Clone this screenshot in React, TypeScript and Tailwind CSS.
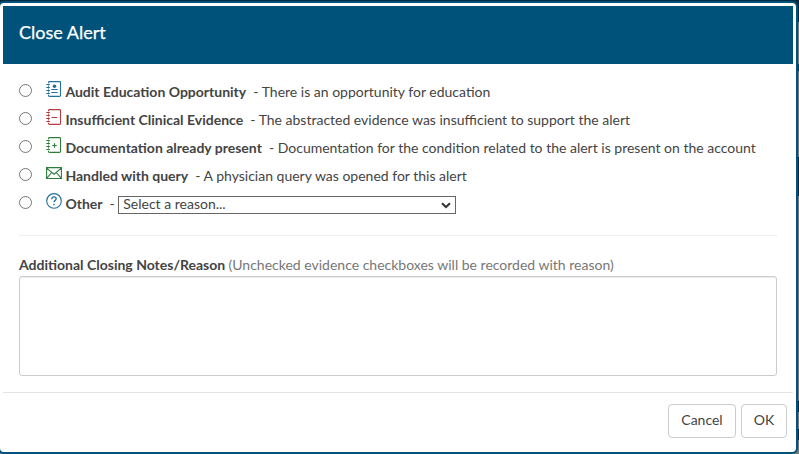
import React from "react";

type IconProps = { kind: "audit" | "minus" | "plus" };

function Notebook({ kind }: IconProps) {
  const color = kind === "audit" ? "#20709b" : kind === "minus" ? "#b83a3c" : "#2f7d3b";
  return (
    <svg width="16" height="16" viewBox="0 0 16 16" fill="none" stroke={color} strokeWidth="1.1">
      <path d="M2.5 2.2V1.5Q2.5 0.6 3.5 0.6H13.5Q14.5 0.6 14.5 1.5V14.5Q14.5 15.4 13.5 15.4H3.5Q2.5 15.4 2.5 14.5V13.8M2.5 4.5V5.7M2.5 7.4V8.6M2.5 10.3V11.5" />
      <path d="M0.3 3.5H3.9M0.3 6.5H3.9M0.3 9.5H3.9M0.3 12.5H3.9" strokeWidth="1" />
      {kind === "audit" && (
        <>
          <circle cx="8.5" cy="5.2" r="1.8" fill={color} stroke="none" />
          <path d="M5.3 8.5H11.7M5.3 11.5H11.7" />
        </>
      )}
      {kind === "minus" && <path d="M5.5 8.5H11" />}
      {kind === "plus" && <path d="M6.2 8.5H10.8M8.5 6.2V10.8" strokeWidth="1.2" />}
    </svg>
  );
}

function Envelope() {
  return (
    <svg width="16" height="16" viewBox="0 0 16 16" fill="none" stroke="#2f7d3b" strokeWidth="1.1">
      <path d="M0.6 2.6H15.4V13.5H0.6ZM0.6 3.1L8 9.2L15.4 3.1M0.8 13.2L5.8 7.5M15.2 13.2L10.2 7.5" />
    </svg>
  );
}

function Question() {
  return (
    <svg width="16" height="16" viewBox="0 0 16 16" fill="none" stroke="#20709b" strokeWidth="1.1">
      <circle cx="8" cy="7.9" r="7.3" />
      <path d="M5.8 6.2V5.9C5.8 4.6 6.7 3.9 8 3.9S10.2 4.6 10.2 5.8C10.2 7.4 8 7.4 8 9.3" strokeWidth="1.3" />
      <circle cx="8" cy="11.5" r="0.85" fill="#20709b" stroke="none" />
    </svg>
  );
}

const reasons = [
  { icon: <Notebook kind="audit" />, title: "Audit Education Opportunity", text: "There is an opportunity for education" },
  { icon: <Notebook kind="minus" />, title: "Insufficient Clinical Evidence", text: "The abstracted evidence was insufficient to support the alert" },
  { icon: <Notebook kind="plus" />, title: "Documentation already present", text: "Documentation for the condition related to the alert is present on the account" },
  { icon: <Envelope />, title: "Handled with query", text: "A physician query was opened for this alert" },
  { icon: <Question />, title: "Other", text: null },
];

export default function App() {
  return (
    <div className="flex h-[454px] w-[799px] overflow-hidden bg-[linear-gradient(#002a42_0_22px,#777_22px_64px,#003554_64px_71px,#777_71px_157px,#002a42_157px_196px,#777_196px_401px,#002a42_401px_412px,#777_412px_429px,#002a42_429px_440px,#777_440px)] pt-px font-['Lato',sans-serif] text-[14px] leading-5 text-[#444]">
      <div className="-ml-0.5 flex h-[453px] w-[800px] shrink-0 flex-col rounded-[6px] border-2 border-[#00527a] bg-white">
        <header className="mx-[3px] mt-[3px] h-[58px] w-[790px] shrink-0 bg-[#00527a] px-4 pt-[14px] text-[18px] leading-6 text-white [-webkit-text-stroke:0.25px_white]">
          Close Alert
        </header>
        <main className="flex flex-col pl-[19px] pt-[14px]">
          {reasons.map((r) => (
            <label key={r.title} className="flex h-7 items-start">
              <input
                type="radio"
                name="reason"
                className="mt-[6px] h-[13px] w-[13px] shrink-0 appearance-none rounded-full border border-[#767676] bg-white"
              />
              <span className="ml-[14px] mt-[3px] h-4 w-4 shrink-0">{r.icon}</span>
              <span className="ml-[3.4px] mt-1 whitespace-pre font-bold">{r.title}</span>
              <span className="ml-[7.1px] mt-1 whitespace-pre">{r.text ? "- " + r.text : "-"}</span>
              {!r.text && (
                <span className="ml-[3.5px] mt-[6px] flex h-[18px] w-[338px] items-center justify-between border border-[#666] pl-1 pr-[4px]">
                  <span className="pb-0.5 leading-4">Select a reason...</span>
                  <svg width="10" height="7" viewBox="0 0 10 7" fill="none" stroke="#333" strokeWidth="2">
                    <path d="M1 1.2L5 5L9 1.2" />
                  </svg>
                </span>
              )}
            </label>
          ))}
        </main>
        <div className="mx-[19px] mt-[17px] h-px w-[758px] bg-[#eee]" />
        <section className="ml-[19px] mt-[19px] flex flex-col">
          <label className="font-bold">
            Additional Closing Notes/Reason{" "}
            <span className="font-normal text-[#777]">(Unchecked evidence checkboxes will be recorded with reason)</span>
          </label>
          <textarea className="mt-px h-[100px] w-[758px] resize-none rounded-[3px] border border-[#ccc] bg-white shadow-[inset_0_1px_1px_rgba(0,0,0,0.075)]" />
        </section>
        <footer className="ml-[3px] mt-4 flex h-[58px] w-[790px] justify-end gap-[5px] border-t border-[#e3e3e3] pr-[6px] pt-[11px]">
          <button className="h-[34px] w-[68px] rounded-[4px] border border-[#ccc] bg-white pb-0.5">Cancel</button>
          <button className="h-[34px] w-[46px] rounded-[4px] border border-[#ccc] bg-white pb-0.5">OK</button>
        </footer>
      </div>
    </div>
  );
}
